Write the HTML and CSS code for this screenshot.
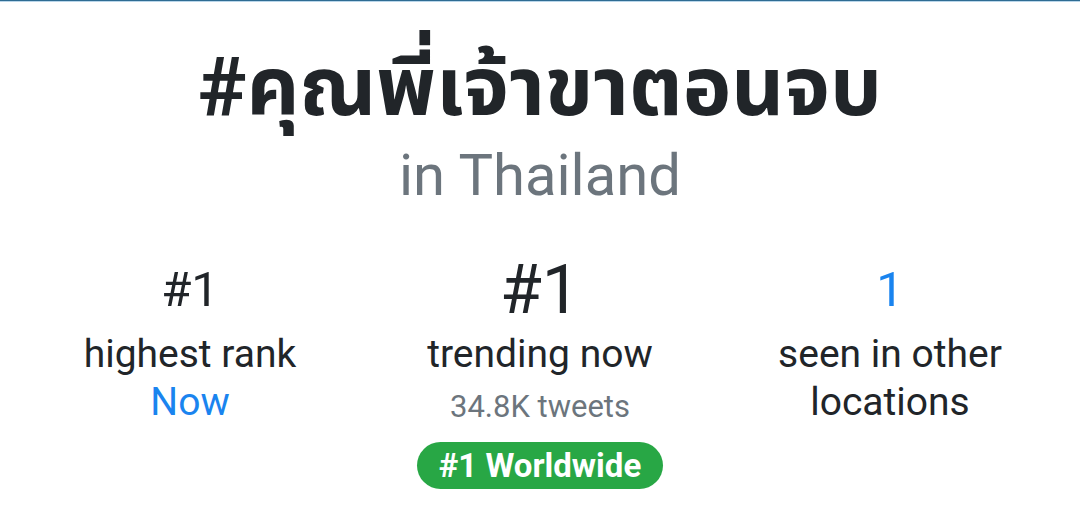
FILE: index.html
```html
<!DOCTYPE html>
<html>
<head>
<meta charset="utf-8">
<link rel="stylesheet" href="styles.css">
</head>
<body>
<div class="topbar"></div>
<header class="head">
  <h1 class="title">#คุณพี่เจ้าขาตอนจบ</h1>
  <div class="place">in Thailand</div>
</header>
<section class="stats">
  <div class="stat">
    <div class="num">#1</div>
    <div class="label">highest rank</div>
    <div class="label blue">Now</div>
  </div>
  <div class="stat">
    <div class="num big">#1</div>
    <div class="label">trending now</div>
    <div class="sub">34.8K tweets</div>
    <span class="badge">#1 Worldwide</span>
  </div>
  <div class="stat">
    <div class="num blue">1</div>
    <div class="label">seen in other<br>locations</div>
  </div>
</section>
</body>
</html>
```
FILE: styles.css
```css
html, body {
  margin: 0;
  padding: 0;
  background: #ffffff;
}
body {
  font-family: Roboto, "Noto Sans Thai", "Noto Sans Thai UI", "Noto Sans", "DejaVu Sans", sans-serif;
  color: #212529;
}
.topbar {
  height: 1px;
  background: #2f6c93;
  border-bottom: 1px solid #b9d6ea;
}
.head {
  text-align: center;
}
.title {
  margin: 0;
  padding-top: 40px;
  font-size: 82px;
  font-weight: 700;
  line-height: 90px;
  color: #212529;
}
.place {
  font-size: 58px;
  line-height: 68px;
  margin-top: 9px;
  color: #6c757d;
}
.stats {
  display: grid;
  grid-template-columns: repeat(3, 350px);
  justify-content: center;
  margin-top: 41px;
  text-align: center;
}
.stat {
  display: flex;
  flex-direction: column;
  align-items: center;
}
.num {
  font-size: 49px;
  line-height: 80px;
}
.num.big {
  font-size: 68px;
}
.label {
  font-size: 39px;
  line-height: 48px;
}
.blue {
  color: #1a84ef;
}
.sub {
  font-size: 31px;
  line-height: 40px;
  margin-top: 9px;
  color: #6c757d;
}
.badge {
  display: inline-block;
  margin-top: 15px;
  height: 47px;
  line-height: 47px;
  padding: 0 22px;
  border-radius: 24px;
  background: #28a745;
  color: #ffffff;
  font-weight: 700;
  font-size: 33px;
}
```
